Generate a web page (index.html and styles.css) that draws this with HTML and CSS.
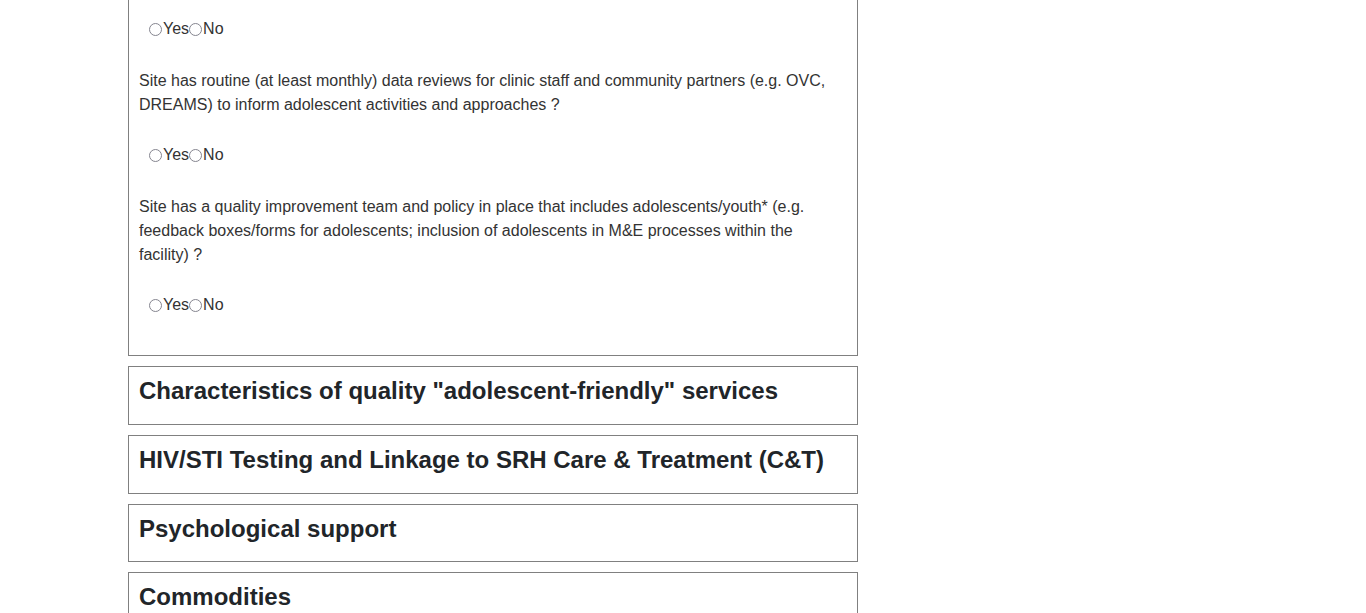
FILE: index.html
```html
<!DOCTYPE html>
<html>
<head>
<meta charset="utf-8">
<link rel="stylesheet" href="styles.css">
</head>
<body>
<div class="layout">
  <div class="main">
    <section class="box box-open">
      <div class="choices">
        <input type="radio" name="q1"><label>Yes</label><input type="radio" name="q1"><label>No</label>
      </div>
      <p class="question">Site has routine (at least monthly) data reviews for clinic staff and community partners (e.g. OVC, DREAMS) to inform adolescent activities and approaches ?</p>
      <div class="choices">
        <input type="radio" name="q2"><label>Yes</label><input type="radio" name="q2"><label>No</label>
      </div>
      <p class="question">Site has a quality improvement team and policy in place that includes adolescents/youth* (e.g. feedback boxes/forms for adolescents; inclusion of adolescents in M&amp;E processes within the facility) ?</p>
      <div class="choices">
        <input type="radio" name="q3"><label>Yes</label><input type="radio" name="q3"><label>No</label>
      </div>
    </section>
    <section class="box"><h3 class="title">Characteristics of quality "adolescent-friendly" services</h3></section>
    <section class="box"><h3 class="title">HIV/STI Testing and Linkage to SRH Care &amp; Treatment (C&amp;T)</h3></section>
    <section class="box"><h3 class="title">Psychological support</h3></section>
    <section class="box"><h3 class="title">Commodities</h3></section>
  </div>
</div>
</body>
</html>
```
FILE: styles.css
```css
html, body {
  margin: 0;
  padding: 0;
  background: #fff;
}
body {
  font-family: "Liberation Sans", Arial, sans-serif;
  font-size: 16px;
  line-height: 24px;
  color: #333;
}
.layout {
  width: 1140px;
  margin: 0 auto;
  display: flex;
}
.main {
  flex: 0 0 66.6667%;
  box-sizing: border-box;
  padding: 0 15px;
}
.box {
  border: 1px solid #808080;
  padding: 10px;
  margin-bottom: 10px;
}
.box-open {
  border-top: none;
  padding-top: 17px;
}
.title {
  margin: 0 0 8px;
  font-size: 24px;
  line-height: 28.8px;
  font-weight: bold;
  color: #212529;
}
.choices {
  display: flex;
  align-items: center;
  height: 24px;
  padding-left: 10px;
  margin-bottom: 28px;
}
.choices input {
  appearance: none;
  -webkit-appearance: none;
  box-sizing: border-box;
  margin: 0 1px 0 0;
  width: 13px;
  height: 13px;
  border: 1.5px solid #85858f;
  border-radius: 50%;
  background: #fff;
}
.question {
  margin: 0 0 26px;
  padding-right: 15px;
}
```
